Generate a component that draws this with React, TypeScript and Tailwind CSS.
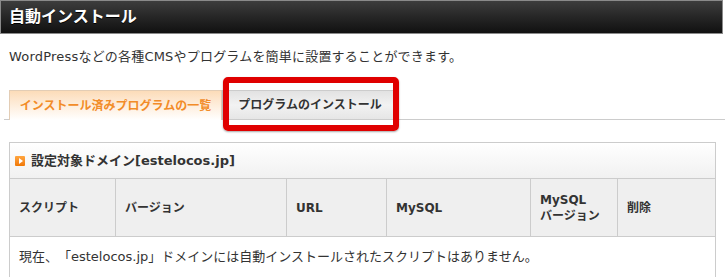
import { Fragment } from 'react';

const columns = [
  { label: 'スクリプト' },
  { label: 'バージョン' },
  { label: 'URL' },
  { label: 'MySQL' },
  { label: 'MySQL\nバージョン' },
  { label: '削除' },
];

// latin glyphs in the shot are Verdana-wide, kana/kanji fall through to the CJK face
const font = { fontFamily: '"DejaVu Sans", "Noto Sans CJK JP", sans-serif' };

export default function App() {
  return (
    <div
      className="relative w-[725px] h-[277px] overflow-hidden bg-white text-[#333] [text-spacing-trim:space-all]"
      style={font}
    >
      {/* title bar */}
      <div className="flex h-[34px] w-[723px] items-center border border-[#8a8a8a] bg-gradient-to-b from-[#3d3d3d] to-[#111] pl-[8px]">
        <h1 className="text-[16px] font-bold leading-none text-white [text-shadow:0_1px_0_#000]">自動インストール</h1>
      </div>

      <p className="mt-[13px] pl-[9px] text-[13px] leading-[20px] tracking-[0.2px]">
        WordPressなどの各種CMSやプログラムを簡単に設置することができます。
      </p>

      {/* tabs */}
      <div className="ml-[4px] mt-[23px] flex h-[30px] items-end border-b border-[#ccc] pl-[5px]">
        <div className="-mb-px flex h-[30px] w-[213px] items-center justify-center border border-b-0 border-[#e3cdb5] bg-gradient-to-b from-[#fcdcb9] to-white text-[12px] font-bold text-[#f28c28]">
          インストール済みプログラムの一覧
        </div>
        <div className="flex h-[29px] w-[176px] items-center justify-center border border-b-0 border-[#ccc] bg-gradient-to-b from-[#e2e2e2] via-[#f2f2f2] to-[#e6e6e6] text-[12px] font-bold text-[#333]">
          プログラムのインストール
        </div>
      </div>

      {/* panel */}
      <div className="ml-[9px] mt-[22px] w-[707px] border border-[#ccc]">
        <div className="flex h-[36px] items-center gap-[6px] border-b border-[#ccc] bg-gradient-to-b from-white to-[#f1f1f1] pl-[5px]">
          <span className="flex h-[10px] w-[10px] items-center justify-center rounded-[1px] bg-gradient-to-b from-[#ffa53d] to-[#f07800]">
            <span className="ml-px h-0 w-0 border-y-[3px] border-l-[4px] border-y-transparent border-l-white" />
          </span>
          <h2 className="text-[13px] font-bold">設定対象ドメイン[estelocos.jp]</h2>
        </div>

        <div className="grid grid-cols-[106px_171px_100px_144px_87px_1fr] border-b border-[#ccc] bg-[#efefef]">
          {columns.map((c, i) => (
            <div
              key={i}
              className={`flex h-[57px] items-center px-[9px] text-[12px] font-bold leading-[16px] ${
                i < columns.length - 1 ? 'border-r border-[#ccc]' : ''
              }`}
            >
              <span>
                {c.label.split('\n').map((t, j) => (
                  <Fragment key={j}>
                    {j > 0 && <br />}
                    {t}
                  </Fragment>
                ))}
              </span>
            </div>
          ))}
        </div>

        <div className="flex h-[40px] items-center pl-[9px] text-[13px]">
          現在、「estelocos.jp」ドメインには自動インストールされたスクリプトはありません。
        </div>
      </div>

      {/* red annotation box */}
      <div className="absolute left-[223px] top-[77px] h-[54px] w-[176px] rounded-[5px] border-[6px] border-[#e00000] shadow-[0_1px_2px_rgba(0,0,0,0.35)]" />
    </div>
  );
}
